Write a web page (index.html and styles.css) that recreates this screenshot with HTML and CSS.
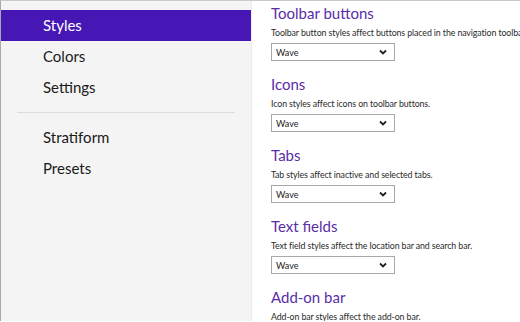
FILE: index.html
```html
<!DOCTYPE html>
<html>
<head>
<meta charset="utf-8">
<link rel="stylesheet" href="styles.css">
</head>
<body>
<div class="page">
  <nav class="sidebar">
    <div class="nav-item active">Styles</div>
    <div class="nav-item">Colors</div>
    <div class="nav-item">Settings</div>
    <div class="divider"></div>
    <div class="nav-item">Stratiform</div>
    <div class="nav-item">Presets</div>
  </nav>
  <main class="content">
    <section class="group">
      <h2 class="group-title">Toolbar buttons</h2>
      <p class="group-desc">Toolbar button styles affect buttons placed in the navigation toolbar.</p>
      <div class="select"><span>Wave</span><svg class="chev" width="8" height="6" viewBox="0 0 8 6"><polyline points="1,1.5 4,4.5 7,1.5" fill="none" stroke="#222" stroke-width="1.8"/></svg></div>
    </section>
    <section class="group">
      <h2 class="group-title">Icons</h2>
      <p class="group-desc">Icon styles affect icons on toolbar buttons.</p>
      <div class="select"><span>Wave</span><svg class="chev" width="8" height="6" viewBox="0 0 8 6"><polyline points="1,1.5 4,4.5 7,1.5" fill="none" stroke="#222" stroke-width="1.8"/></svg></div>
    </section>
    <section class="group">
      <h2 class="group-title">Tabs</h2>
      <p class="group-desc">Tab styles affect inactive and selected tabs.</p>
      <div class="select"><span>Wave</span><svg class="chev" width="8" height="6" viewBox="0 0 8 6"><polyline points="1,1.5 4,4.5 7,1.5" fill="none" stroke="#222" stroke-width="1.8"/></svg></div>
    </section>
    <section class="group">
      <h2 class="group-title">Text fields</h2>
      <p class="group-desc">Text field styles affect the location bar and search bar.</p>
      <div class="select"><span>Wave</span><svg class="chev" width="8" height="6" viewBox="0 0 8 6"><polyline points="1,1.5 4,4.5 7,1.5" fill="none" stroke="#222" stroke-width="1.8"/></svg></div>
    </section>
    <section class="group">
      <h2 class="group-title">Add-on bar</h2>
      <p class="group-desc">Add-on bar styles affect the add-on bar.</p>
    </section>
  </main>
</div>
</body>
</html>
```
FILE: styles.css
```css
html, body {
  margin: 0;
  padding: 0;
  background: #ffffff;
}
body {
  font-family: Lato, "Open Sans", sans-serif;
  width: 520px;
  height: 322px;
  overflow: hidden;
}
.page {
  display: flex;
  height: 321px;
  border-top: 1px solid #c9c9c9;
  border-left: 1px solid #a9a9a9;
  box-sizing: border-box;
}
.sidebar {
  width: 251px;
  flex: none;
  background: #f4f4f4;
  border-right: 1px solid #ececec;
  padding-top: 9px;
  box-sizing: border-box;
  display: flex;
  flex-direction: column;
}
.nav-item {
  height: 31px;
  line-height: 31px;
  padding-left: 42px;
  font-size: 15px;
  color: #1a1a1a;
}
.nav-item.active {
  background: #4617b4;
  color: #ffffff;
}
.divider {
  height: 1px;
  background: #dcdcdc;
  margin: 9px 16px 9px 16px;
}
.content {
  flex: 1;
  min-width: 0;
  padding-left: 19px;
  padding-top: 1px;
  overflow: hidden;
}
.group {
  margin-bottom: 12px;
}
.group-title {
  margin: 0;
  font-weight: 400;
  font-size: 15px;
  line-height: 22px;
  color: #5a2da6;
  white-space: nowrap;
}
.group-desc {
  margin: 2px 0 0 0;
  font-size: 8.8px;
  letter-spacing: -0.1px;
  line-height: 14px;
  color: #2a2a2a;
  white-space: nowrap;
}
.select {
  margin-top: 3px;
  width: 124px;
  height: 18px;
  box-sizing: border-box;
  border: 1px solid #a8a8a8;
  display: flex;
  align-items: center;
  justify-content: space-between;
  padding: 0 7px 0 4px;
  font-size: 9px;
  color: #222;
  background: #fff;
}
.chev {
  display: block;
}
```
